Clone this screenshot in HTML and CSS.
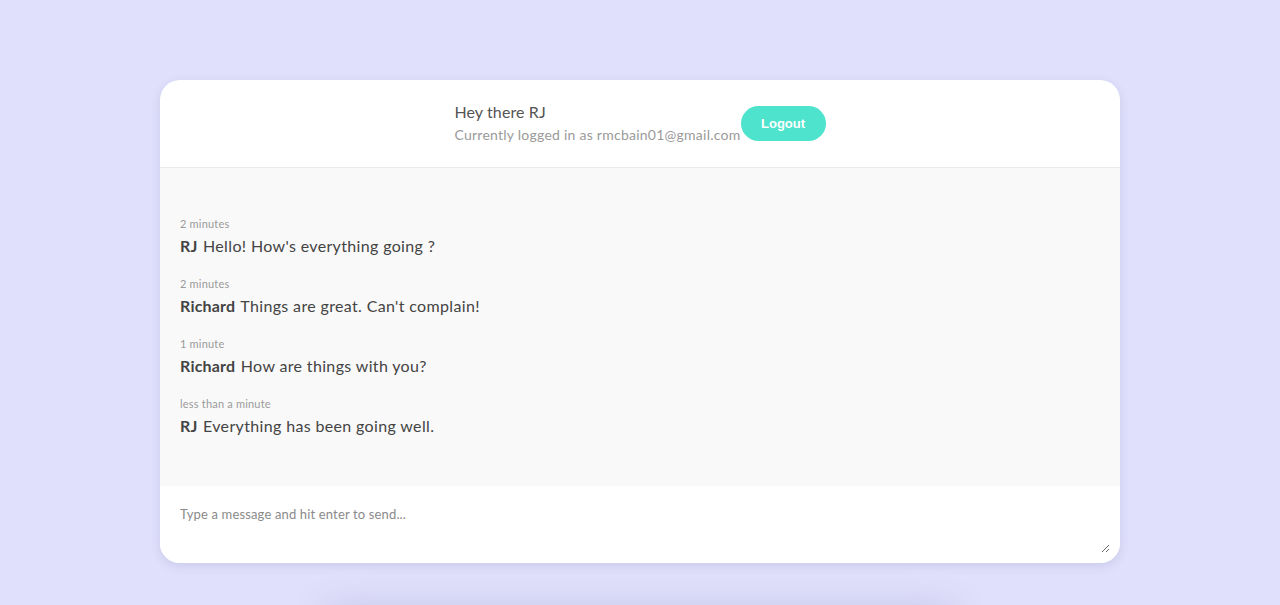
FILE: index.html
```html
<!DOCTYPE html>
<html lang="en">
<head>
<meta charset="utf-8">
<title>Chat</title>
<link rel="stylesheet" href="styles.css">
</head>
<body>
<main class="chat-card">
  <header class="chat-header">
    <div class="user-info">
      <div class="greeting">Hey there RJ</div>
      <div class="logged-in">Currently logged in as rmcbain01@gmail.com</div>
    </div>
    <button class="logout-btn" type="button">Logout</button>
  </header>
  <section class="messages">
    <div class="message">
      <div class="timestamp">2 minutes</div>
      <div class="message-line"><span class="author">RJ</span> Hello! How's everything going ?</div>
    </div>
    <div class="message">
      <div class="timestamp">2 minutes</div>
      <div class="message-line"><span class="author">Richard</span> Things are great. Can't complain!</div>
    </div>
    <div class="message">
      <div class="timestamp">1 minute</div>
      <div class="message-line"><span class="author">Richard</span> How are things with you?</div>
    </div>
    <div class="message">
      <div class="timestamp">less than a minute</div>
      <div class="message-line"><span class="author">RJ</span> Everything has been going well.</div>
    </div>
  </section>
  <div class="composer-wrap">
    <textarea class="composer" placeholder="Type a message and hit enter to send..."></textarea>
  </div>
</main>
<div class="below-card"></div>
</body>
</html>
```
FILE: styles.css
```css
html, body {
  margin: 0;
  padding: 0;
}
body {
  background: #e0e0fc;
  font-family: Lato, "Open Sans", sans-serif;
  color: #444;
  overflow: hidden;
  height: 605px;
}
.chat-card {
  width: 960px;
  margin: 80px auto 0;
  background: #fff;
  border-radius: 20px;
  overflow: hidden;
  box-shadow: 0 3px 10px rgba(90, 90, 150, 0.16);
  display: flex;
  flex-direction: column;
}
.chat-header {
  height: 87px;
  border-bottom: 1px solid #ebebeb;
  display: flex;
  align-items: center;
  justify-content: center;
}
.user-info {
  display: flex;
  flex-direction: column;
}
.greeting {
  font-size: 16px;
  line-height: 22px;
  color: #555;
  letter-spacing: 0.1px;
}
.logged-in {
  font-size: 14px;
  line-height: 24px;
  color: #9a9a9a;
  letter-spacing: 0.25px;
}
.logout-btn {
  width: 85px;
  height: 35px;
  border: none;
  border-radius: 18px;
  background: #4de3cc;
  color: #fff;
  font-family: "Liberation Sans", Arial, sans-serif;
  font-weight: bold;
  font-size: 13px;
  padding: 0;
}
.messages {
  background: #f9f9f9;
  padding: 48px 20px;
  display: flex;
  flex-direction: column;
  gap: 18px;
}
.timestamp {
  font-size: 11px;
  line-height: 16px;
  color: #999;
  margin-bottom: 2px;
  letter-spacing: 0.2px;
}
.message-line {
  font-size: 16px;
  line-height: 24px;
  color: #444;
  letter-spacing: 0.35px;
}
.author {
  font-weight: 700;
  margin-right: 1px;
  letter-spacing: 0.2px;
}
.composer-wrap {
  background: #fff;
  padding: 0 10px 10px 0;
}
.composer {
  display: block;
  box-sizing: border-box;
  width: 100%;
  height: 67px;
  border: none;
  outline: none;
  padding: 20px 20px 0;
  font-family: Lato, "Open Sans", sans-serif;
  font-size: 13px;
  line-height: 16px;
  letter-spacing: 0.15px;
  color: #444;
  background: #fff;
}
.composer::placeholder {
  color: #8a8a8a;
}
.below-card {
  width: 620px;
  height: 120px;
  margin: 52px auto 0;
  background: #e0e0fc;
  box-shadow: 0 0 40px rgba(90, 90, 150, 0.3);
}
```
